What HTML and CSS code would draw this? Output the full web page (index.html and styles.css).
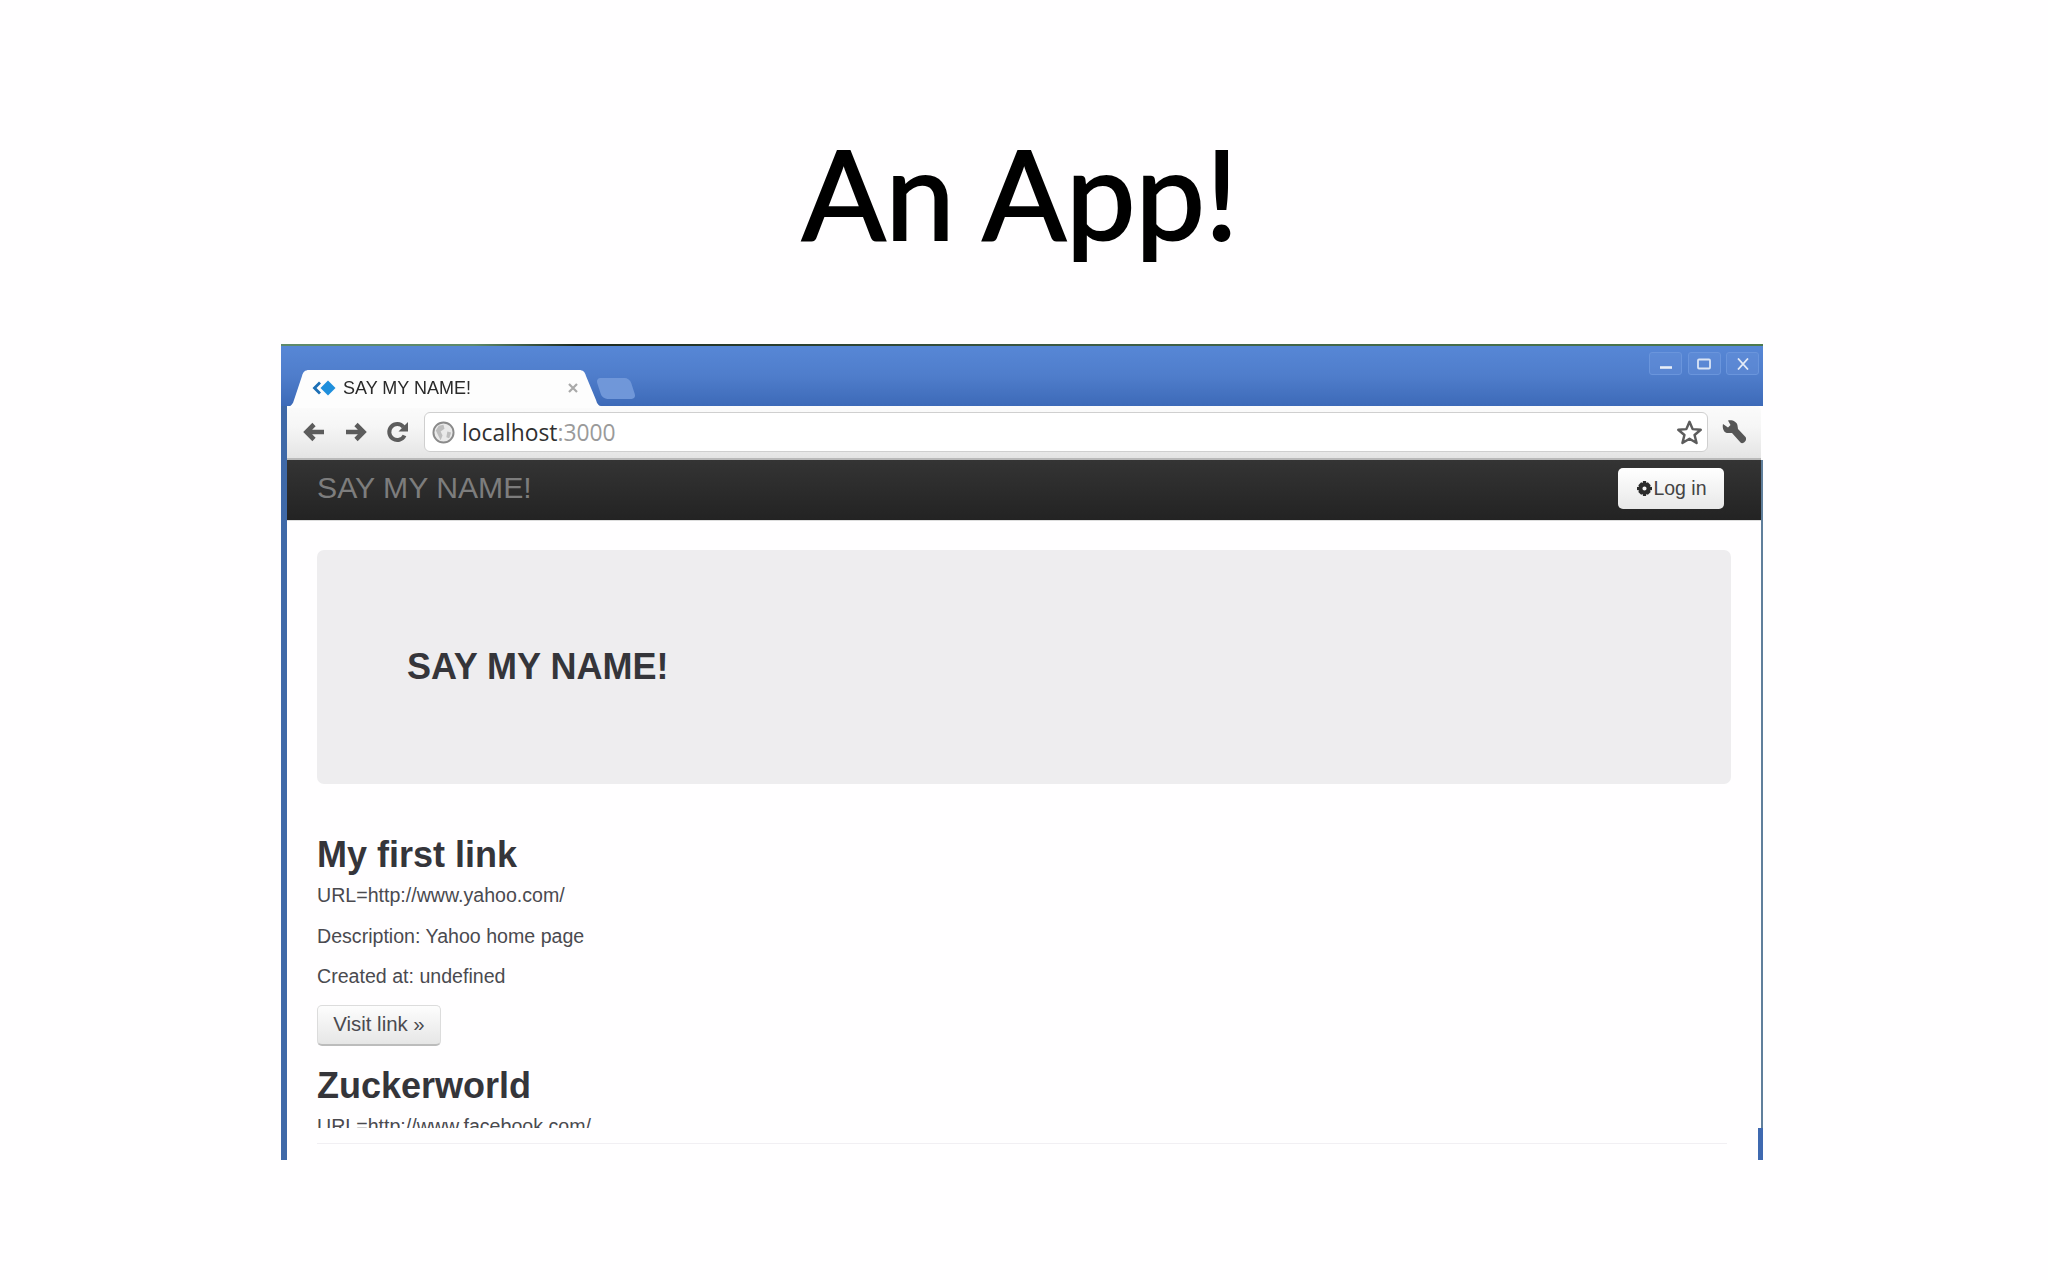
FILE: index.html
```html
<!DOCTYPE html>
<html lang="en">
<head>
<meta charset="utf-8">
<title>An App!</title>
<link rel="stylesheet" href="styles.css">
</head>
<body>
<main class="slide">
  <h1 class="slide-title">An App!</h1>
  <section class="window">
    <div class="top-line"></div>
    <div class="tabstrip">
      <div class="tab">
        <svg class="tab-shape" viewBox="0 0 314 38" preserveAspectRatio="none"><path d="M0 38C4 36 6 34 7 30L15 6C16 2 18 0 22 0L292 0C296 0 298 2 299 6L309 30C310 34 312 36 314 36L314 38Z" fill="#fdfdfd"/></svg>
        <svg class="favicon" viewBox="0 0 24 16"><path d="M7 1.5 0.5 8 7 14.5 9 12.5 4.5 8 9 3.5Z" fill="#1c6fb5"/><path d="M16 0.5 23.5 8 16 15.5 8.5 8Z" fill="#1f8fdc"/></svg>
        <span class="tab-title">SAY MY NAME!</span>
        <svg class="tab-close" viewBox="0 0 12 12"><path d="M2 2 10 10M10 2 2 10" stroke="#a9a9a9" stroke-width="2.2" fill="none"/></svg>
      </div>
      <div class="new-tab"></div>
      <div class="win-controls">
        <div class="win-btn"><svg viewBox="0 0 16 12"><path d="M2 9.5H14" stroke="#e8eef8" stroke-width="2.6"/></svg></div>
        <div class="win-btn"><svg viewBox="0 0 16 12"><rect x="2" y="1.5" width="12" height="9" rx="1" fill="none" stroke="#dbe5f5" stroke-width="1.8"/></svg></div>
        <div class="win-btn"><svg viewBox="0 0 16 12"><path d="M3 0.5 13 11.5M13 0.5 3 11.5" stroke="#e4ebf7" stroke-width="1.8"/></svg></div>
      </div>
    </div>
    <div class="toolbar">
      <svg class="nav-icon" viewBox="0 0 24 22"><path d="M22 11H5M12 3.5 4.5 11 12 18.5" fill="none" stroke="#5c5c5c" stroke-width="4.6"/></svg>
      <svg class="nav-icon" viewBox="0 0 24 22"><path d="M2 11H19M12 3.5 19.5 11 12 18.5" fill="none" stroke="#5c5c5c" stroke-width="4.6"/></svg>
      <svg class="nav-icon" viewBox="0 0 24 22"><path d="M18.5 14.5A8 8 0 1 1 17.5 6" fill="none" stroke="#5c5c5c" stroke-width="4"/><path d="M22 1V10.5H12.5Z" fill="#5c5c5c"/></svg>
      <div class="omnibox">
        <svg class="globe" viewBox="0 0 24 24"><circle cx="12" cy="12" r="10.5" fill="#e9e9e9" stroke="#8a8a8a" stroke-width="2"/><path d="M7 5 12 4 13 8 9 11 11 15 9 20 6 14 4 10ZM16 11 20 12 18 18 15 17Z" fill="#bdbdbd"/></svg>
        <span class="url">localhost<span class="url-port">:3000</span></span>
        <svg class="star" viewBox="0 0 24 24"><path d="M12 2.5 14.8 9 22 9.6 16.5 14.2 18.3 21.3 12 17.5 5.7 21.3 7.5 14.2 2 9.6 9.2 9Z" fill="#fff" stroke="#5c5c5c" stroke-width="2.2" stroke-linejoin="round"/></svg>
      </div>
      <svg class="wrench" viewBox="0 0 24 24"><path d="M1 4 6 7.5 8.5 5 6 0.5C10 -0.5 15 1.5 15.5 5.5L16 9 23.5 17C24.5 18.5 24 20.5 23 21.5 21.5 23.5 19.5 23.5 18.5 22.5L10 13 5 13C2 12.5 0 8 1 4Z" fill="#565656"/></svg>
    </div>
    <div class="page">
      <nav class="navbar">
        <span class="brand">SAY MY NAME!</span>
        <button class="login" type="button">
          <svg class="gear" viewBox="0 0 16 16"><path d="M6.4 0H9.6L10 2.2 11.6 1.4 14.6 4.4 13.8 6 16 6.4V9.6L13.8 10 14.6 11.6 11.6 14.6 10 13.8 9.6 16H6.4L6 13.8 4.4 14.6 1.4 11.6 2.2 10 0 9.6V6.4L2.2 6 1.4 4.4 4.4 1.4 6 2.2ZM8 5.8A2.2 2.2 0 1 0 8 10.2 2.2 2.2 0 1 0 8 5.8Z" fill="#2b2b2b" fill-rule="evenodd"/></svg>Log in
        </button>
      </nav>
      <div class="content">
        <div class="hero"><h2 class="hero-title">SAY MY NAME!</h2></div>
        <article class="link">
          <h3 class="link-title">My first link</h3>
          <p class="link-line">URL=http://www.yahoo.com/</p>
          <p class="link-line">Description: Yahoo home page</p>
          <p class="link-line">Created at: undefined</p>
          <a class="visit">Visit link »</a>
        </article>
        <article class="link">
          <h3 class="link-title">Zuckerworld</h3>
          <p class="link-line">URL=http://www.facebook.com/</p>
        </article>
      </div>
    </div>
    <div class="window-foot"><div class="foot-rule"></div></div>
  </section>
</main>
</body>
</html>
```
FILE: styles.css
```css
* { box-sizing: border-box; }
html, body { margin: 0; height: 100%; overflow: hidden; background: #fffeff; }
.slide { width: 2048px; height: 1280px; }
.slide-title {
  margin: 0;
  height: 344px;
  padding: 117px 8px 0 0;
  text-align: center;
  font: 400 124px/150px Lato, sans-serif;
  letter-spacing: 0;
  -webkit-text-stroke: 2px #000;
  color: #000;
}
.window {
  margin-left: 281px;
  width: 1482px;
  height: 816px;
  display: flex;
  flex-direction: column;
  border-left: 6px solid #3f69a8;
  font-family: "Liberation Sans", Arial, sans-serif;
  filter: blur(0.5px);
}
.top-line {
  height: 2px;
  margin-left: -6px;
  background: linear-gradient(90deg, #5e8a6a 0, #5e8a6a 13%, #1d2a20 20%, #3d5c45 55%, #4d7a4d 100%);
}
.tabstrip {
  height: 60px;
  margin-left: -6px;
  padding: 24px 0 0 6px;
  display: flex;
  align-items: flex-start;
  position: relative;
  background: linear-gradient(180deg, #5787d6 0, #4f7dcb 50%, #3d6ab8 100%);
}
.tab {
  position: relative;
  width: 314px;
  height: 36px;
  display: flex;
  align-items: center;
  padding: 0 22px 0 25px;
}
.tab-shape { position: absolute; left: 0; top: 0; width: 314px; height: 38px; }
.favicon { position: relative; width: 24px; height: 16px; flex: none; }
.tab-title { position: relative; margin-left: 7px; font-size: 18px; color: #2a2a2a; flex: 1; white-space: nowrap; }
.tab-close { position: relative; width: 12px; height: 12px; flex: none; }
.new-tab {
  width: 34px;
  height: 21px;
  margin: 8px 0 0 -2px;
  background: #7097d9;
  border-radius: 5px;
  transform: skewX(18deg);
}
.win-controls { margin-left: auto; margin-top: -18px; padding-right: 4px; display: flex; gap: 5.5px; }
.win-btn {
  width: 33px;
  height: 23px;
  display: flex;
  align-items: center;
  justify-content: center;
  background: rgba(110, 150, 220, 0.35);
  border: 1px solid #6a95dc;
  border-radius: 3px;
}
.win-btn svg { width: 16px; height: 12px; }
.toolbar {
  height: 54px;
  display: flex;
  align-items: center;
  padding: 0 15px 0 15px;
  background: linear-gradient(180deg, #fbfbfb 0, #f6f6f6 40%, #e4e4e4 100%);
  border-top-right-radius: 5px;
  border-bottom: 2px solid #b9b9b9;
  margin-right: 2px;
}
.nav-icon { width: 24px; height: 22px; flex: none; margin-right: 18px; }
.nav-icon + .nav-icon { margin-right: 18px; }
.nav-icon + .nav-icon + .nav-icon { margin-right: 14px; }
.omnibox {
  flex: 1;
  height: 40px;
  display: flex;
  align-items: center;
  padding: 0 4px 0 7px;
  background: #fff;
  border: 1px solid #cfcfcf;
  border-radius: 6px;
  margin-right: 14px;
}
.globe { width: 23px; height: 23px; flex: none; }
.url { margin-left: 7px; font: 400 22.8px "Open Sans", sans-serif; color: #303030; flex: 1; }
.url-port { color: #9a9a9a; }
.star { width: 27px; height: 27px; flex: none; }
.wrench { width: 24px; height: 24px; flex: none; }
.page {
  height: 668px;
  overflow: hidden;
  background: #fffeff;
  border-right: 2px solid #607f9c;
}
.navbar {
  height: 61px;
  display: flex;
  align-items: center;
  justify-content: space-between;
  padding: 0 37px 4px 30px;
  background: linear-gradient(180deg, #343434 0, #232323 100%);
  border-bottom: 1px solid #ddd;
}
.brand { font-size: 30.2px; color: #7d7d7d; }
.login {
  width: 106px;
  height: 41px;
  padding: 0 0 0 2px;
  display: flex;
  align-items: center;
  justify-content: center;
  gap: 1px;
  font: 400 19.5px "Liberation Sans", sans-serif;
  color: #444;
  background: linear-gradient(180deg, #fff 0, #e8e8e8 100%);
  border: 0;
  border-radius: 5px;
}
.gear { width: 15px; height: 15px; flex: none; }
.content { padding: 29px 30px 0; color: #3a3a3f; }
.hero {
  height: 234px;
  display: flex;
  align-items: center;
  padding: 0 90px;
  background: #eeedef;
  border-radius: 7px;
}
.hero-title { margin: 0; font-size: 36px; line-height: 1; font-weight: 700; color: #35353a; }
.link { display: flex; flex-direction: column; align-items: flex-start; }
.hero + .link { margin-top: 50px; }
.link + .link { margin-top: 19px; }
.link-title { margin: 0 0 6px; font-size: 36px; line-height: 42px; font-weight: 700; color: #35353a; }
.link-line { margin: 0 0 13.5px; font-size: 19.6px; line-height: 27px; color: #4a4a4f; }
.visit {
  display: flex;
  align-items: center;
  justify-content: center;
  width: 124px;
  height: 41px;
  margin-top: 1px;
  font-size: 20.4px;
  color: #4a4a4f;
  background: linear-gradient(180deg, #fdfdfd 0, #e6e6e6 100%);
  border: 1px solid #dcdcdc;
  border-bottom: 2px solid #bcbcbc;
  border-radius: 5px;
}
.window-foot {
  height: 32px;
  padding: 15px 30px 0;
  border-right: 5px solid #3f69b0;
}
.foot-rule { height: 1px; background: #f1eff3; margin-right: 1px; }
```
